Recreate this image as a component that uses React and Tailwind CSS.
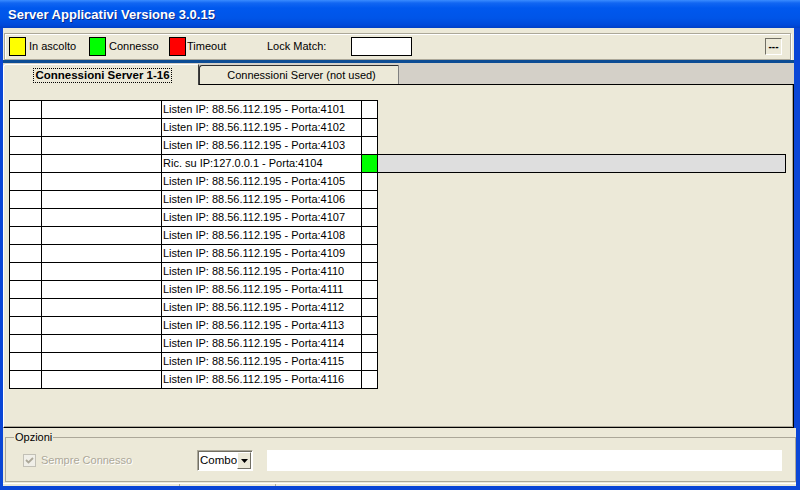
import React from "react";

const rows = Array.from({ length: 16 }, (_, i) =>
  i === 3
    ? "Ric. su IP:127.0.0.1 - Porta:4104"
    : `Listen IP: 88.56.112.195 - Porta:${4101 + i}`
);

const Legend = ({ color, label, gap }) => (
  <div className="flex items-center w-[80px]">
    <div className={`w-[17px] h-[19px] border border-black ${color}`} />
    <span className={gap}>{label}</span>
  </div>
);

const App = () => {
  return (
    <div className="w-[800px] h-[490px] overflow-hidden bg-[#0A46D6] flex flex-col font-['Liberation_Sans',Arial,sans-serif] text-[11px] text-black">
      {/* title bar */}
      <div className="h-[28px] shrink-0 flex items-center pl-[8px] pt-[2px] bg-[linear-gradient(to_bottom,#3A8CFF_0px,#1266F2_3px,#0058EE_8px,#0055E8_18px,#0049DA_25px,#003FC6_28px)]">
        <span className="text-white font-bold text-[13px] [text-shadow:1px_1px_0_#0A2A8C]">
          Server Applicativi Versione 3.0.15
        </span>
      </div>

      <div className="flex-1 flex flex-col pl-[3px]">
        {/* toolbar */}
        <div className="w-[791px] h-[32px] bg-[#ECE9D8] pt-[5px] pl-[1px]">
          <div className="w-[787px] h-[27px] border border-[#ACA899] shadow-[inset_1px_1px_0_#fff,1px_1px_0_#fff] flex items-center pl-[4px]">
            <Legend color="bg-[#FFFF00]" label="In ascolto" gap="ml-[3px]" />
            <Legend color="bg-[#00FF00]" label="Connesso" gap="ml-[3px]" />
            <Legend color="bg-[#FF0000]" label="Timeout" gap="ml-[1px]" />
            <span className="ml-[18px] w-[84px]">Lock Match:</span>
            <div className="w-[61px] h-[19px] bg-white border border-black" />
            <div className="ml-auto mr-[8px] w-[17px] h-[17px] border border-t-[#716F64] border-l-[#716F64] border-r-white border-b-white flex items-center justify-center font-bold text-[10px] leading-none">
              ---
            </div>
          </div>
        </div>
        <div className="w-[791px] h-[3px] bg-[#0C4C94]" />

        {/* tabs */}
        <div className="w-[791px] h-[21px] bg-[#D4D0C8] flex items-end">
          <div className="relative z-10 -mb-px w-[196px] h-[21px] bg-[#ECE9D8] border-t border-l border-white border-r border-r-[#404040] rounded-tl-[3px] flex items-center justify-center pl-[3px] pt-[1px]">
            <span className="font-bold text-[11.5px] border border-dotted border-black px-[1px] leading-[13px]">
              Connessioni Server 1-16
            </span>
          </div>
          <div className="w-[200px] h-[19px] bg-[#ECE9D8] border-t border-l border-[#303030] border-r border-r-[#808080] rounded-tl-[3px] flex items-center justify-center pl-[5px]">
            Connessioni Server (not used)
          </div>
        </div>

        {/* tab panel */}
        <div className="w-[791px] h-[344px] bg-[#ECE9D8] border-t border-black border-l border-l-white border-r border-b shadow-[inset_-1px_-1px_0_#ACA899] pt-[15px] pl-[5px]">
          <div className="w-[369px] border-b border-black">
            {rows.map((text, i) => (
              <div key={i} className="flex h-[18px]">
                <div className="shrink-0 w-[32px] h-[18px] border-l border-t border-black bg-white" />
                <div className="shrink-0 w-[120px] h-[18px] border-l border-t border-black bg-white" />
                <div className="shrink-0 w-[200px] h-[18px] border-l border-t border-black bg-white pl-[1px] leading-[16px] whitespace-nowrap overflow-hidden">
                  {text}
                </div>
                <div
                  className={`shrink-0 w-[17px] h-[18px] border-l border-t border-r border-black ${
                    i === 3 ? "bg-[#00FF00]" : "bg-white"
                  }`}
                />
                {i === 3 && (
                  <div className="shrink-0 -ml-px -mb-px w-[409px] h-[19px] bg-[#DEDEDE] border border-black" />
                )}
              </div>
            ))}
          </div>
        </div>

        {/* options */}
        <div className="w-[793px] h-[58px] bg-[#ECE9D8] flex flex-col">
          <fieldset className="mt-[3px] ml-[2px] w-[791px] h-[51px] border border-[#ACA899] px-[8px]">
            <legend className="px-[1px] leading-[13px]">Opzioni</legend>
            <div className="flex items-center h-[21px] mt-[6px]">
              <div className="shrink-0 w-[174px] ml-[9px] flex items-center">
                <div className="w-[13px] h-[13px] border border-[#C2C0B6] bg-[#F0EFE8] flex items-center justify-center">
                  <svg width="9" height="9" viewBox="0 0 9 9">
                    <path d="M1 4 L3.5 6.5 L8 2" stroke="#ACA899" strokeWidth="1.8" fill="none" />
                  </svg>
                </div>
                <span className="ml-[5px] text-[#ACA899] [text-shadow:1px_1px_0_#fff] whitespace-nowrap">
                  Sempre Connesso
                </span>
              </div>
              <div className="shrink-0 w-[56px] h-[21px] bg-white border border-t-[#ACA899] border-l-[#ACA899] border-b-white border-r-white shadow-[inset_1px_1px_0_#716F64] flex items-center pl-[2px] pr-px">
                <span className="flex-1 text-[11.5px] leading-none">Combo</span>
                <div className="w-[17px] h-[17px] bg-[#ECE9D8] border border-t-white border-l-white border-b-[#716F64] border-r-[#716F64] flex items-center justify-center">
                  <svg width="7" height="4" viewBox="0 0 7 4">
                    <path d="M0 0 H7 L3.5 4 Z" fill="#000" />
                  </svg>
                </div>
              </div>
              <div className="shrink-0 ml-[14px] w-[515px] h-[21px] bg-white" />
            </div>
          </fieldset>
          <div className="mt-[1px] h-[3px] border-t border-white flex">
            <div className="w-[177px] border-r border-[#ACA899]" />
            <div className="w-[96px] border-r border-[#ACA899]" />
          </div>
        </div>
      </div>
    </div>
  );
};

export default App;
